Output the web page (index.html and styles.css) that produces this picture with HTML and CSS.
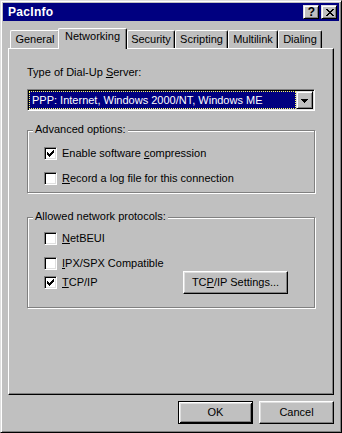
FILE: index.html
```html
<!DOCTYPE html>
<html>
<head>
<meta charset="utf-8">
<title>PacInfo</title>
<link rel="stylesheet" href="styles.css">
</head>
<body>
<div class="window">
  <div class="caption">
    <span class="caption-title">PacInfo</span>
    <div class="caption-btns">
      <span class="cap-btn cap-help">?</span>
      <span class="cap-btn cap-close">
        <svg width="8" height="7" viewBox="0 0 8 7" shape-rendering="crispEdges"><path d="M0 0h2v1h-2z M6 0h2v1h-2z M1 1h2v1h-2z M5 1h2v1h-2z M2 2h4v1h-4z M3 3h2v1h-2z M2 4h4v1h-4z M1 5h2v1h-2z M5 5h2v1h-2z M0 6h2v1h-2z M6 6h2v1h-2z" fill="#000"/></svg>
      </span>
    </div>
  </div>
  <div class="content">
    <div class="tabs">
      <div class="tab tab-general">General</div>
      <div class="tab tab-net active">Networking</div>
      <div class="tab tab-security">Security</div>
      <div class="tab tab-scripting">Scripting</div>
      <div class="tab tab-multilink">Multilink</div>
      <div class="tab tab-dialing">Dialing</div>
    </div>
    <div class="panel">
      <div class="field-label">Type of Dial-Up <u>S</u>erver:</div>
      <div class="combo">
        <div class="combo-value">PPP: Internet, Windows 2000/NT, Windows ME</div>
        <div class="combo-btn">
          <svg width="7" height="4" viewBox="0 0 7 4" shape-rendering="crispEdges"><path d="M0 0h7v1h-1v1h-1v1h-1v1h-1v-1h-1v-1h-1v-1h-1z" fill="#000"/></svg>
        </div>
      </div>

      <div class="group group-adv">
        <span class="legend">Advanced options:</span>
        <div class="row">
          <span class="cb"><svg class="tick" width="7" height="7" viewBox="0 0 7 7" shape-rendering="crispEdges"><path d="M6 0h1v1h-1z M5 1h2v1h-2z M0 2h1v1h-1z M4 2h3v1h-3z M0 3h2v1h-2z M3 3h3v1h-3z M0 4h5v1h-5z M1 5h3v1h-3z M2 6h1v1h-1z" fill="#000"/></svg></span>
          <span class="cb-text">Enable software <u>c</u>ompression</span>
        </div>
        <div class="row row-next">
          <span class="cb"></span>
          <span class="cb-text"><u>R</u>ecord a log file for this connection</span>
        </div>
      </div>

      <div class="group group-proto">
        <span class="legend">Allowed network protocols:</span>
        <div class="row">
          <span class="cb"></span>
          <span class="cb-text"><u>N</u>etBEUI</span>
        </div>
        <div class="row row-next">
          <span class="cb"></span>
          <span class="cb-text"><u>I</u>PX/SPX Compatible</span>
        </div>
        <div class="row row-btn">
          <div class="check-col">
            <span class="cb"><svg class="tick" width="7" height="7" viewBox="0 0 7 7" shape-rendering="crispEdges"><path d="M6 0h1v1h-1z M5 1h2v1h-2z M0 2h1v1h-1z M4 2h3v1h-3z M0 3h2v1h-2z M3 3h3v1h-3z M0 4h5v1h-5z M1 5h3v1h-3z M2 6h1v1h-1z" fill="#000"/></svg></span>
            <span class="cb-text"><u>T</u>CP/IP</span>
          </div>
          <button class="btn btn-settings">TC<u>P</u>/IP Settings...</button>
        </div>
      </div>
    </div>
    <div class="footer">
      <button class="btn btn-default">OK</button>
      <button class="btn">Cancel</button>
    </div>
  </div>
</div>
</body>
</html>
```

FILE: styles.css
```css
html, body {
  margin: 0;
  padding: 0;
  background: #c0c0c0;
}

body {
  font-family: "Liberation Sans", Arial, sans-serif;
  font-size: 11px;
  line-height: 13px;
  color: #000;
}

u {
  text-decoration: underline;
  text-underline-offset: 1px;
}

.window {
  width: 342px;
  height: 433px;
  box-sizing: border-box;
  border: 1px solid;
  border-color: #dfdfdf #000 #000 #dfdfdf;
  box-shadow: inset 1px 1px #fff, inset -1px -1px #808080;
  padding: 2px;
  background: #c0c0c0;
}

/* caption */
.caption {
  height: 18px;
  background: #000080;
  display: flex;
  align-items: center;
  justify-content: space-between;
  padding: 0 2px 0 5px;
}

.caption-title {
  color: #fff;
  font-weight: bold;
  font-size: 12px;
  letter-spacing: 0.3px;
}

.caption-btns {
  display: flex;
  gap: 2px;
}

.cap-btn {
  width: 16px;
  height: 14px;
  box-sizing: border-box;
  border: 1px solid;
  border-color: #dfdfdf #000 #000 #dfdfdf;
  box-shadow: inset 1px 1px #fff, inset -1px -1px #808080;
  background: #c0c0c0;
  display: flex;
  align-items: center;
  justify-content: center;
}

.cap-help {
  font-weight: bold;
  font-size: 12px;
  line-height: 12px;
  padding-left: 1px;
}

.cap-close svg {
  display: block;
  margin-top: 1px;
  margin-left: 1px;
}

/* content */
.content {
  padding: 7px 5px 0;
}

.tabs {
  display: flex;
  align-items: flex-end;
  height: 20px;
  margin-left: 2px;
  position: relative;
  z-index: 1;
}

.tab {
  height: 18px;
  box-sizing: border-box;
  border: 1px solid;
  border-color: #fff #000 transparent #fff;
  border-bottom: 0;
  border-radius: 2px 2px 0 0;
  box-shadow: inset -1px 0 #808080;
  background: #c0c0c0;
  padding-top: 2px;
  text-align: center;
  white-space: nowrap;
}

.tab.active {
  height: 21px;
  margin-bottom: -1px;
  margin-left: -2px;
  padding-top: 1px;
}

.tab-general { width: 50px; }
.tab-net { width: 69px; }
.tab-security { width: 48px; }
.tab-scripting { width: 53px; }
.tab-multilink { width: 50px; }
.tab-dialing { width: 44px; }

.panel {
  height: 347px;
  box-sizing: border-box;
  border: 1px solid;
  border-color: #fff #000 #000 #fff;
  box-shadow: inset -1px -1px #808080;
  padding: 0 18px;
}

.field-label {
  margin-top: 17px;
}

/* combo box */
.combo {
  margin-top: 10px;
  height: 22px;
  box-sizing: border-box;
  border: 1px solid;
  border-color: #808080 #fff #fff #808080;
  box-shadow: inset 1px 1px #000, inset -1px -1px #dfdfdf;
  padding: 1px;
  background: #fff;
  display: flex;
}

.combo-value {
  flex: 1;
  background: #000080;
  color: #fff;
  border: 1px dotted #ffff60;
  padding-left: 2px;
  line-height: 16px;
  white-space: nowrap;
}

.combo-btn {
  width: 17px;
  box-sizing: border-box;
  border: 1px solid;
  border-color: #dfdfdf #000 #000 #dfdfdf;
  box-shadow: inset 1px 1px #fff, inset -1px -1px #808080;
  background: #c0c0c0;
  display: flex;
  align-items: center;
  justify-content: center;
}

.combo-btn svg {
  display: block;
  margin-top: 1px;
}

/* group boxes */
.group {
  position: relative;
  box-sizing: border-box;
  border: 1px solid #808080;
  box-shadow: inset 1px 1px #fff, 1px 1px #fff;
  padding-left: 16px;
}

.group-adv {
  margin-top: 19px;
  height: 63px;
  padding-top: 16px;
}

.group-proto {
  margin-top: 24px;
  height: 91px;
  padding-top: 14px;
}

.legend {
  position: absolute;
  top: -8px;
  left: 5px;
  padding: 0 2px;
  background: #c0c0c0;
  white-space: nowrap;
}

.row {
  display: flex;
  align-items: center;
  height: 13px;
}

.row-next {
  margin-top: 12px;
}

.row-btn {
  height: 23px;
  margin-top: 1px;
}

.check-col {
  width: 139px;
  display: flex;
  align-items: center;
}

/* checkbox */
.cb {
  width: 13px;
  height: 13px;
  flex: none;
  box-sizing: border-box;
  border: 1px solid;
  border-color: #808080 #fff #fff #808080;
  box-shadow: inset 1px 1px #000, inset -1px -1px #dfdfdf;
  background: #fff;
  padding: 2px;
}

.tick {
  display: block;
}

.cb-text {
  margin-left: 5px;
  white-space: nowrap;
}

/* buttons */
.btn {
  font-family: "Liberation Sans", Arial, sans-serif;
  font-size: 11px;
  line-height: 13px;
  color: #000;
  height: 23px;
  width: 75px;
  box-sizing: border-box;
  border: 1px solid;
  border-color: #fff #000 #000 #fff;
  box-shadow: inset -1px -1px #808080, inset 1px 1px #dfdfdf;
  background: #c0c0c0;
  padding: 0;
  margin: 0;
  border-radius: 0;
}

.btn-settings {
  width: 105px;
}

.btn-default {
  border-color: #000;
  box-shadow: inset 1px 1px #fff, inset -1px -1px #000, inset 2px 2px #dfdfdf, inset -2px -2px #808080;
}

.footer {
  display: flex;
  justify-content: flex-end;
  gap: 6px;
  margin-top: 6px;
}
```
